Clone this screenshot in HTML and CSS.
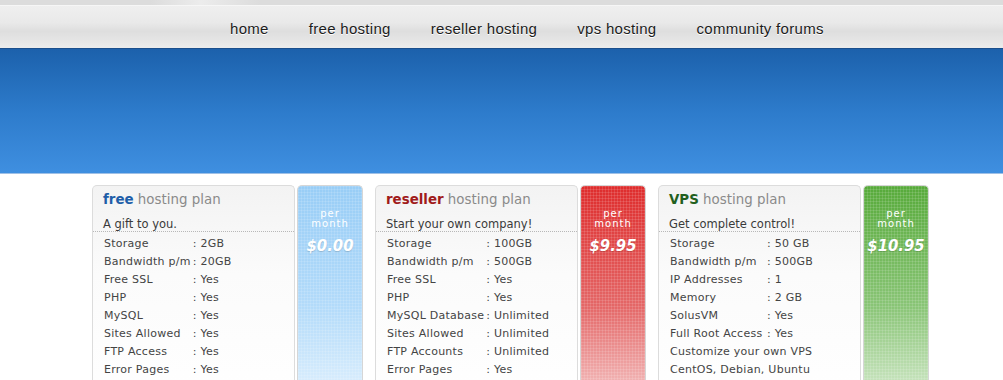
FILE: index.html
```html
<!DOCTYPE html>
<html lang="en">
<head>
  <meta charset="UTF-8">
  <title>Hosting Plans</title>
  <link rel="stylesheet" href="styles.css">
</head>
<body>
  <div class="top-strip"></div>
  <nav class="nav">
    <a href="#">home</a>
    <a href="#">free hosting</a>
    <a href="#">reseller hosting</a>
    <a href="#">vps hosting</a>
    <a href="#">community forums</a>
  </nav>
  <div class="banner"></div>

  <div class="plans">
    <div class="plan plan-free">
      <div class="card">
        <h2><b>free</b> hosting plan</h2>
        <p class="tagline">A gift to you.</p>
        <table class="specs">
          <tr><td>Storage</td><td>: 2GB</td></tr>
          <tr><td>Bandwidth p/m</td><td>: 20GB</td></tr>
          <tr><td>Free SSL</td><td>: Yes</td></tr>
          <tr><td>PHP</td><td>: Yes</td></tr>
          <tr><td>MySQL</td><td>: Yes</td></tr>
          <tr><td>Sites Allowed</td><td>: Yes</td></tr>
          <tr><td>FTP Access</td><td>: Yes</td></tr>
          <tr><td>Error Pages</td><td>: Yes</td></tr>
        </table>
      </div>
      <div class="price">
        <span class="per">per<br>month</span>
        <span class="amount">$0.00</span>
      </div>
    </div>

    <div class="plan plan-reseller">
      <div class="card">
        <h2><b>reseller</b> hosting plan</h2>
        <p class="tagline">Start your own company!</p>
        <table class="specs">
          <tr><td>Storage</td><td>: 100GB</td></tr>
          <tr><td>Bandwidth p/m</td><td>: 500GB</td></tr>
          <tr><td>Free SSL</td><td>: Yes</td></tr>
          <tr><td>PHP</td><td>: Yes</td></tr>
          <tr><td>MySQL Database</td><td>: Unlimited</td></tr>
          <tr><td>Sites Allowed</td><td>: Unlimited</td></tr>
          <tr><td>FTP Accounts</td><td>: Unlimited</td></tr>
          <tr><td>Error Pages</td><td>: Yes</td></tr>
        </table>
      </div>
      <div class="price">
        <span class="per">per<br>month</span>
        <span class="amount">$9.95</span>
      </div>
    </div>

    <div class="plan plan-vps">
      <div class="card">
        <h2><b>VPS</b> hosting plan</h2>
        <p class="tagline">Get complete control!</p>
        <table class="specs">
          <tr><td>Storage</td><td>: 50 GB</td></tr>
          <tr><td>Bandwidth p/m</td><td>: 500GB</td></tr>
          <tr><td>IP Addresses</td><td>: 1</td></tr>
          <tr><td>Memory</td><td>: 2 GB</td></tr>
          <tr><td>SolusVM</td><td>: Yes</td></tr>
          <tr><td>Full Root Access</td><td>: Yes</td></tr>
          <tr><td colspan="2">Customize your own VPS</td></tr>
          <tr><td colspan="2">CentOS, Debian, Ubuntu</td></tr>
        </table>
      </div>
      <div class="price">
        <span class="per">per<br>month</span>
        <span class="amount">$10.95</span>
      </div>
    </div>
  </div>
</body>
</html>
```

FILE: styles.css
```css
body {
  margin: 0;
  background: #fff;
  font-family: 'DejaVu Sans', Verdana, sans-serif;
  overflow: hidden;
}

.top-strip {
  height: 5px;
  background: linear-gradient(to right, #dcdcdc 0%, #dcdcdc 15%, #ececec 20%, #dcdcdc 26%, #dcdcdc 100%);
  border-bottom: 1px solid #f6f6f6;
}

.nav {
  display: flex;
  gap: 40px;
  align-items: center;
  height: 42px;
  padding-left: 230px;
  background: linear-gradient(to bottom, #efefef 0%, #e9e9e9 40%, #dedede 60%, #e6e6e6 85%, #ececec 100%);
  border-bottom: 1px solid #1b4f8c;
}

.nav a {
  font-family: 'Liberation Sans', Arial, sans-serif;
  font-size: 15px;
  letter-spacing: 0.3px;
  color: #1c1c1c;
  text-decoration: none;
  text-shadow: 0 1px 0 #fff;
  padding-top: 2px;
}

.banner {
  height: 124px;
  background: linear-gradient(to bottom, #1c61ac 0%, #2d7bcb 50%, #3f8fe0 100%);
  border-bottom: 1px solid #9fc0e6;
}

.plans {
  display: flex;
  gap: 12px;
  padding: 11px 0 0 92px;
}

.plan {
  display: flex;
  gap: 2px;
}

.card {
  width: 201px;
  height: 220px;
  border: 1px solid #dcdcdc;
  border-bottom: none;
  border-radius: 5px 5px 0 0;
  background: linear-gradient(to bottom, #f3f3f3 0%, #fbfbfb 40%, #fff 100%);
}

.card h2 {
  margin: 0;
  padding: 4px 0 0 10px;
  font-size: 13.4px;
  font-weight: normal;
  line-height: 20px;
  color: #8a8a8a;
}

.card h2 b {
  font-weight: bold;
}

.plan-free h2 b { color: #1e5ea8; }
.plan-reseller h2 b { color: #a01a1a; }
.plan-vps h2 b { color: #22601e; }

.tagline {
  margin: 0;
  padding: 6px 0 0 10px;
  height: 15px;
  font-size: 11.5px;
  line-height: 16px;
  color: #3a3a3a;
  border-bottom: 1px dotted #b8b8b8;
}

.specs {
  border-collapse: collapse;
  margin: 2px 0 0 11px;
  font-size: 11px;
  color: #444;
  letter-spacing: 0.25px;
}

.specs td {
  height: 18px;
  padding: 0;
  white-space: nowrap;
}

.specs td:first-child {
  padding-right: 2px;
}

.price {
  width: 64px;
  height: 220px;
  border: 1px solid #d6d6d6;
  border-bottom: none;
  border-radius: 5px 5px 0 0;
  display: flex;
  flex-direction: column;
  align-items: center;
  padding-top: 23px;
  box-sizing: content-box;
  color: #fff;
  text-align: center;
  background-image:
    repeating-linear-gradient(to right, rgba(255,255,255,0.12) 0 1px, transparent 1px 3px),
    repeating-linear-gradient(to bottom, rgba(255,255,255,0.12) 0 1px, transparent 1px 3px),
    var(--fill);
}

.plan-free .price { --fill: linear-gradient(to bottom, #98cdf6 0%, #b3dbfa 50%, #eef7fe 100%); }
.plan-reseller .price { --fill: linear-gradient(to bottom, #de2c2c 0%, #e46868 50%, #f9e1e1 100%); }
.plan-vps .price { --fill: linear-gradient(to bottom, #57aa3a 0%, #8ac577 50%, #ebf5e7 100%); }

.per {
  font-size: 10px;
  line-height: 10px;
  letter-spacing: 1px;
}

.amount {
  margin-top: 7px;
  font-family: 'DejaVu Sans Condensed', 'DejaVu Sans', sans-serif;
  font-size: 16.5px;
  font-weight: bold;
  font-style: italic;
  text-shadow: 0 1px 1px rgba(0,0,0,0.15);
}
```
